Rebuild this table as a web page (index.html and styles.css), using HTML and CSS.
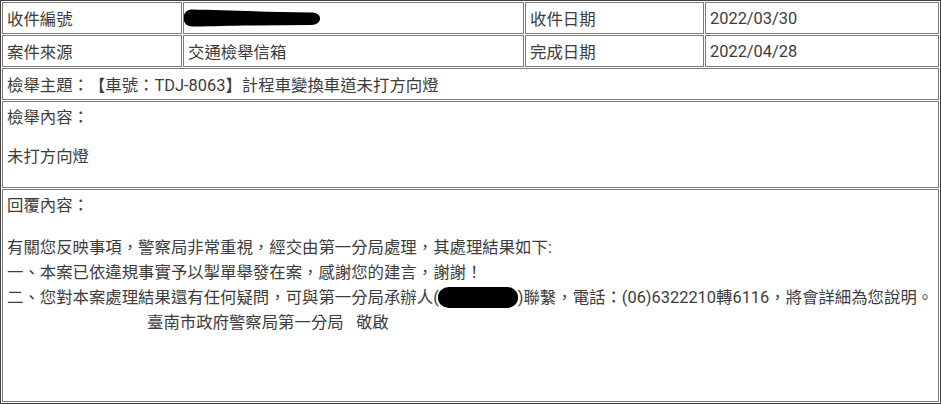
FILE: index.html
```html
<!DOCTYPE html>
<html lang="zh-Hant">
<head>
<meta charset="utf-8">
<title>檢舉案件</title>
<link rel="stylesheet" href="styles.css">
</head>
<body>
<div class="sheet">
  <div class="cell">收件編號</div>
  <div class="cell"><svg class="redact" width="137" height="18" viewBox="0 0 137 18"><path d="M9 0.5 C40 1 80 3 128 3.5 C134 3.5 137 6 137 9.5 C137 13 134 16 128 16 L60 16.5 C40 17 20 17.5 9 17.5 C4 17.5 0.5 14 0.5 9 C0.5 4 4 0.5 9 0.5 Z" fill="#000"/></svg></div>
  <div class="cell">收件日期</div>
  <div class="cell">2022/03/30</div>

  <div class="cell">案件來源</div>
  <div class="cell">交通檢舉信箱</div>
  <div class="cell">完成日期</div>
  <div class="cell">2022/04/28</div>

  <div class="cell span">檢舉主題：【車號：TDJ-8063】計程車變換車道未打方向燈</div>

  <div class="cell span block">
    <div class="label">檢舉內容：</div>
    <div class="body-a">未打方向燈</div>
  </div>

  <div class="cell span block">
    <div class="label">回覆內容：</div>
    <div class="body-b">
      <div>有關您反映事項，警察局非常重視，經交由第一分局處理，其處理結果如下:</div>
      <div>一、本案已依違規事實予以掣單舉發在案，感謝您的建言，謝謝！</div>
      <div>二、您對本案處理結果還有任何疑問，可與第一分局承辦人(<span class="blot"></span>)聯繫，電話：(06)6322210轉6116，將會詳細為您說明。</div>
      <div class="sign">臺南市政府警察局第一分局&nbsp;&nbsp;&nbsp;敬啟</div>
    </div>
  </div>
</div>
</body>
</html>
```

FILE: styles.css
```css
html, body {
  margin: 0;
  padding: 0;
  background: #fff;
}

body {
  font-family: Roboto, "Noto Sans CJK TC", sans-serif;
  font-size: 16.4px;
  color: #3c3c3c;
  text-spacing-trim: space-all;
}

.sheet {
  width: 941px;
  height: 404px;
  box-sizing: border-box;
  border: 1px solid #404040;
  padding: 1px;
  display: grid;
  grid-template-columns: 180px 341px 179px 234px;
  grid-template-rows: 32px 32px 32px 87px 213px;
  gap: 1px;
}

.cell {
  border: 1px solid #7c7c7c;
  padding: 0 4px;
  display: flex;
  align-items: center;
  white-space: nowrap;
  overflow: hidden;
}

.span {
  grid-column: 1 / -1;
}

.block {
  display: block;
  padding: 4px 4px;
  line-height: 24px;
}

.body-a {
  margin-top: 15px;
}

.body-b {
  margin-top: 17px;
  line-height: 25px;
}

.sign {
  padding-left: 140px;
}

.redact {
  display: block;
  margin-left: -5px;
  margin-top: -1px;
}

.blot {
  display: inline-block;
  width: 80px;
  height: 21px;
  margin-left: -1px;
  border-radius: 11px / 10px;
  background: #000;
  vertical-align: -5px;
}
```
